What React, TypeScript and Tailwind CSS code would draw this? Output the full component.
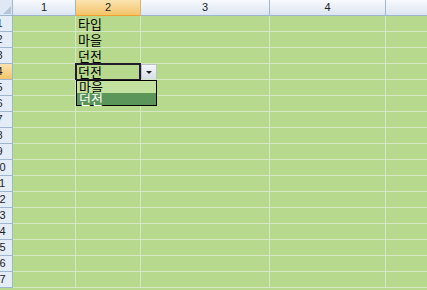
import React from "react";

const cols = [63, 65, 129, 116, 60];
const cellText: Record<number, string> = { 1: "타입", 2: "마을", 3: "던전", 4: "던전" };

function RowHeader({ n, active }: { n: number; active?: boolean }) {
  return (
    <div
      className={`w-[13px] h-[16px] shrink-0 overflow-hidden border-r border-b border-[#9eb6ce] ${
        active ? "bg-gradient-to-b from-[#fbe3b0] to-[#f3c468]" : "bg-[#e4ecf7]"
      }`}
    >
      <div
        className="ml-[-14px] w-[27px] text-center text-[11px] leading-[15px] text-[#222]"
        style={{ fontFamily: '"Liberation Sans", Arial, sans-serif' }}
      >
        {n}
      </div>
    </div>
  );
}

export default function App() {
  const rows = Array.from({ length: 17 }, (_, i) => i + 1);
  return (
    <div
      className="w-[427px] h-[290px] overflow-hidden bg-[#b6d98e] flex flex-col"
      style={{ fontFamily: '"Noto Sans CJK KR", "Noto Sans", sans-serif' }}
    >
      {/* header */}
      <div className="flex h-[16px] shrink-0">
        <div className="w-[13px] h-[16px] shrink-0 bg-[#dfe8f5] border-r border-b border-[#9eb6ce] flex items-end justify-end p-[1px]">
          <div className="w-0 h-0 border-l-[8px] border-l-transparent border-b-[8px] border-b-[#b3c6dc]" />
        </div>
        {cols.map((w, i) => (
          <div
            key={i}
            className={`h-[16px] shrink-0 border-r border-b text-center text-[11px] leading-[15px] text-[#222] ${
              i === 1
                ? "bg-gradient-to-b from-[#fbe3b0] to-[#f3c468] border-[#e3b25a] border-b-[#f0a030]"
                : "bg-gradient-to-b from-[#f8fafd] to-[#dce5f2] border-[#9eb6ce]"
            }`}
            style={{ width: w, fontFamily: '"Liberation Sans", Arial, sans-serif' }}
          >
            {i < 4 ? i + 1 : ""}
          </div>
        ))}
      </div>
      {rows.map((r) => (
        <div key={r} className="flex h-[16px] shrink-0">
          <RowHeader n={r} active={r === 4} />
          {cols.map((w, i) => (
            <div
              key={i}
              className="h-[16px] shrink-0 border-r border-b border-[#d5e8c6] relative pl-[2px] text-[13px] leading-[16px] text-black whitespace-nowrap"
              style={{ width: w }}
            >
              {i === 1 && cellText[r]}
              {i === 1 && r === 4 && (
                <>
                  <div className="absolute left-[-1px] top-[-1px] w-[66px] h-[18px] border-2 border-[#231d2e]" />
                  <div className="absolute left-[65px] top-[0px] w-[16px] h-[16px] bg-gradient-to-b from-[#f4f6fa] to-[#d8dee8] border border-[#b8c0cc] flex items-center justify-center">
                    <div className="w-0 h-0 border-l-[3px] border-r-[3px] border-t-[3px] border-l-transparent border-r-transparent border-t-[#222]" />
                  </div>
                  <div className="absolute left-[0px] top-[16px] w-[81px] h-[26px] bg-[#c3e2a0] border border-black z-10 flex flex-col">
                    <div className="h-[12px] pl-[2px] text-[13px] leading-[12px] text-black">마을</div>
                    <div className="h-[12px] pl-[2px] text-[13px] leading-[12px] text-white bg-[#5b955a]">던전</div>
                  </div>
                </>
              )}
            </div>
          ))}
        </div>
      ))}
    </div>
  );
}
